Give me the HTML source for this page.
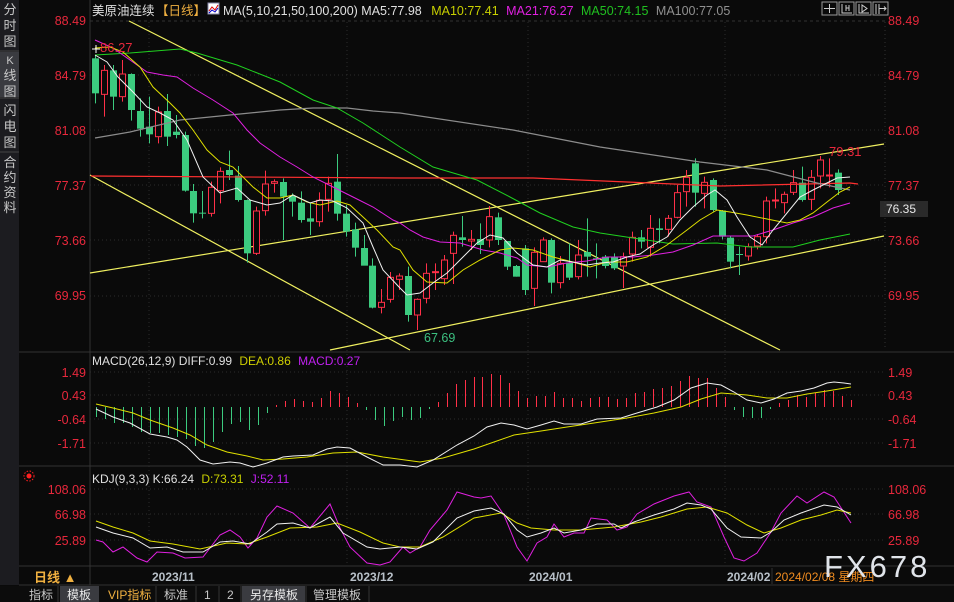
<!DOCTYPE html>
<html><head><meta charset="utf-8"><style>
html,body{margin:0;padding:0;background:#0a0a0a;width:954px;height:602px;overflow:hidden;font-family:"Liberation Sans","Noto Sans CJK SC",sans-serif}
svg{position:absolute;left:0;top:0}
text{font-family:"Liberation Sans","Noto Sans CJK SC",sans-serif}
</style></head><body>
<svg id="s" width="954" height="602" xmlns="http://www.w3.org/2000/svg">
<rect width="954" height="602" fill="#0a0a0a"/>
<!-- sidebar -->
<rect x="0" y="0" width="19" height="585" fill="#1c1c20"/>
<rect x="0" y="52" width="19" height="45" fill="#3a3b40"/>
<g fill="#c8c8c8" font-size="13" text-anchor="middle">
<text x="10" y="14">分</text><text x="10" y="30">时</text><text x="10" y="46">图</text>
<text x="10" y="64" font-size="11">K</text><text x="10" y="80">线</text><text x="10" y="96">图</text>
<text x="10" y="115">闪</text><text x="10" y="131">电</text><text x="10" y="147">图</text>
<text x="10" y="167">合</text><text x="10" y="182">约</text><text x="10" y="197">资</text><text x="10" y="212">料</text>
</g>
<line x1="0" y1="51" x2="19" y2="51" stroke="#444"/><line x1="0" y1="98" x2="19" y2="98" stroke="#444"/><line x1="0" y1="152" x2="19" y2="152" stroke="#444"/>
<!-- frame -->
<line x1="90" y1="0" x2="90" y2="585" stroke="#333"/>
<line x1="19" y1="352" x2="954" y2="352" stroke="#333"/>
<line x1="19" y1="466" x2="954" y2="466" stroke="#333"/>
<line x1="19" y1="566" x2="954" y2="566" stroke="#333"/>
<line x1="19" y1="585" x2="954" y2="585" stroke="#333"/>
<g id="grid" stroke="#2c2c2c" stroke-dasharray="1,3"></g>
<line x1="90" y1="21" x2="885" y2="21" stroke="#333" stroke-dasharray="3,3"/>
<!-- header -->
<text x="92" y="15" font-size="12.5" fill="#e0e0e0">美原油连续</text>
<text x="156" y="15" font-size="12.5" fill="#f0b040">【日线】</text>
<rect x="208" y="3" width="11" height="11" fill="#fff" stroke="#88a"/>
<polyline points="209,11 212,7 215,10 218,5" stroke="#d00" fill="none"/>
<polyline points="209,13 212,10 215,12 218,8" stroke="#00c" fill="none"/>
<text x="223" y="15" font-size="12.5"><tspan fill="#e0e0e0">MA(5,10,21,50,100,200) </tspan><tspan fill="#e0e0e0">MA5:77.98 </tspan><tspan fill="#c8d000" dx="6">MA10:77.41 </tspan><tspan fill="#e020e0" dx="4">MA21:76.27 </tspan><tspan fill="#20c020" dx="4">MA50:74.15 </tspan><tspan fill="#909090" dx="4">MA100:77.05</tspan></text>
<g stroke="#999" fill="none"><rect x="822" y="2" width="15" height="13"/><rect x="839" y="2" width="15" height="13"/><rect x="856" y="2" width="15" height="13"/><rect x="873" y="2" width="15" height="13"/></g>
<g stroke="#ccc" fill="none"><path d="M829.5 4v9M824 8.5h11"/><path d="M842 4v9h10M846 5v6M849 5v6M846 8h3"/><path d="M859 4v9h10M862 5v7l5-3.5z"/><path d="M876 4v10M879 4v10M879 8.5h7M884 6.5l2 2-2 2"/></g>
<!-- price axis labels -->
<g font-size="12.5" fill="#e8283c">
<text x="86" y="25" text-anchor="end">88.49</text><text x="86" y="80" text-anchor="end">84.79</text><text x="86" y="135" text-anchor="end">81.08</text><text x="86" y="190" text-anchor="end">77.37</text><text x="86" y="245" text-anchor="end">73.66</text><text x="86" y="300" text-anchor="end">69.95</text>
<text x="888" y="25">88.49</text><text x="888" y="80">84.79</text><text x="888" y="135">81.08</text><text x="888" y="190">77.37</text><text x="888" y="245">73.66</text><text x="888" y="300">69.95</text>
<text x="86" y="377" text-anchor="end">1.49</text><text x="86" y="400" text-anchor="end">0.43</text><text x="86" y="424" text-anchor="end">-0.64</text><text x="86" y="448" text-anchor="end">-1.71</text>
<text x="888" y="377">1.49</text><text x="888" y="400">0.43</text><text x="888" y="424">-0.64</text><text x="888" y="448">-1.71</text>
<text x="86" y="494" text-anchor="end">108.06</text><text x="86" y="519" text-anchor="end">66.98</text><text x="86" y="545" text-anchor="end">25.89</text>
<text x="888" y="494">108.06</text><text x="888" y="519">66.98</text><text x="888" y="545">25.89</text>
</g>
<rect x="880" y="201" width="48" height="16" fill="#2a2a2a"/>
<text x="886" y="213" font-size="12" fill="#e8e8e8">76.35</text>
<line x1="885" y1="22" x2="885" y2="350" stroke="#333" stroke-dasharray="1,3"/>
<g id="main"></g>
<text x="100" y="52" font-size="13" fill="#e8283c">86.27</text>
<text x="829" y="156" font-size="13" fill="#e8283c">79.31</text>
<text x="424" y="342" font-size="12.5" fill="#3cc080">67.69</text>
<!-- MACD -->
<text x="92" y="365" font-size="12"><tspan fill="#e0e0e0">MACD(26,12,9) DIFF:0.99 </tspan><tspan fill="#d0d000" dx="4">DEA:0.86 </tspan><tspan fill="#c020f0" dx="4">MACD:0.27</tspan></text>
<text x="92" y="483" font-size="12"><tspan fill="#e0e0e0">KDJ(9,3,3) K:66.24 </tspan><tspan fill="#c8d000" dx="4">D:73.31 </tspan><tspan fill="#c020f0" dx="4">J:52.11</tspan></text>
<circle cx="29" cy="476" r="2.5" fill="#ff2020"/><circle cx="29" cy="476" r="5" fill="none" stroke="#ff2020" stroke-dasharray="1.5,1.5"/>
<!-- dates -->
<text x="34" y="582" font-size="13" font-weight="bold" fill="#f0b040">日线 ▲</text>
<g font-size="12" font-weight="bold" fill="#b8c0c8"><text x="152" y="581">2023/11</text><text x="350" y="581">2023/12</text><text x="529" y="581">2024/01</text><text x="727" y="581">2024/02</text></g>
<text x="775" y="581" font-size="12" fill="#f08c20">2024/02/08 星期四</text>
<line x1="772" y1="568" x2="772" y2="584" stroke="#333"/>
<text x="824" y="577" font-size="31" fill="#e0e4ea" letter-spacing="3">FX678</text>
<!-- tabs -->
<rect x="0" y="586" width="954" height="16" fill="#0c0c0c"/>
<rect x="60" y="586" width="39" height="16" fill="#3a3b40"/><rect x="242" y="586" width="63" height="16" fill="#3a3b40"/>
<g stroke="#333"><line x1="58" y1="586" x2="58" y2="602"/><line x1="156" y1="586" x2="156" y2="602"/><line x1="196" y1="586" x2="196" y2="602"/><line x1="219" y1="586" x2="219" y2="602"/><line x1="241" y1="586" x2="241" y2="602"/><line x1="306" y1="586" x2="306" y2="602"/><line x1="369" y1="586" x2="369" y2="602"/></g>
<g font-size="12" fill="#c8c8c8"><text x="29" y="599">指标</text><text x="67" y="599" fill="#e8e8e8">模板</text><text x="108" y="599" fill="#f0b040">VIP指标</text><text x="164" y="599">标准</text><text x="204" y="599">1</text><text x="227" y="599">2</text><text x="250" y="599" fill="#e8e8e8">另存模板</text><text x="313" y="599">管理模板</text></g>
</svg>
<script>
var NS="http://www.w3.org/2000/svg",S=document.getElementById('s'),M=document.getElementById('main'),G=document.getElementById('grid');
function el(t,a,p){var e=document.createElementNS(NS,t);for(var k in a)e.setAttribute(k,a[k]);(p||M).appendChild(e);return e;}
[75,130,185,240,296,372,395,419,443,489,514,540].forEach(function(y){el('line',{x1:90,y1:y,x2:885,y2:y},G);});
[149,347,528,725].forEach(function(x){el('line',{x1:x,y1:22,x2:x,y2:566},G);});
function pl(pts,c,w){el('polyline',{points:pts.map(function(p){return p.join(',')}).join(' '),fill:'none',stroke:c,'stroke-width':w||1});}
[[129,21,780,350],[90,175,410,350],[90,273,884,144],[330,350,884,236]].forEach(function(l){el('line',{x1:l[0],y1:l[1],x2:l[2],y2:l[3],stroke:'#f0f060','stroke-width':1.2});});
var A=[['g',85,190,75,220],['r',121,193,105,260],['g',121,200,105,240],['r',132,200,90,215],['g',132,240,130,272],['g',243,296,205,320],['g',290,313,200,340],['r',246,320,230,340],['g',243,320,192,348],['g',305,315,255,325],['g',315,482,305,485],['g',483,550,462,578],['g',548,551,483,565],['r',472,550,455,560],['r',424,482,412,520],['g',420,435,362,450],['g',437,510,408,515],['g',510,670,508,698],['r',543,670,530,675],['r',462,542,422,557],['r',455,460,448,488],['g',456,500,445,630],['g',498,515,490,560],['g',518,570,484,578],['g',565,575,520,615],['r',511,575,487,590],['r',460,508,440,545],['g',455,551,372,572],['g',551,605,525,620],['g',598,653,578,680],['g',654,707,615,690],['g',707,833,685,835],['r',817,832,777,850],['r',742,808,726,818]];
var B=[['r',438,448,430,480],['g',438,555,410,575],['r',508,555,505,600],['r',430,505,400,520],['r',425,428,400,480],['r',390,446,375,465],['r',316,370,305,462],['g',322,330,258,350],['r',328,333,300,360],['g',327,345,280,372],['r',260,330,228,352],['g',262,330,248,345],['g',333,410,333,420],['g',408,440,405,440],['g',355,480,345,495],['r',367,475,352,528],['r',330,395,322,395],['g',330,458,325,490],['r',400,458,378,475],['g',398,443,340,450],['r',375,440,330,448],['g',366,380,265,440],['g',385,389,340,445],['g',380,408,375,415],['g',380,415,370,420],['r',380,408,368,474],['r',322,372,305,395],['g',322,335,300,355],['r',295,352,255,380],['g',295,300,265,340],['r',265,298,255,320],['r',188,262,165,265],['r',142,185,120,230],['g',100,188,85,230],['r',157,190,140,235],['g',150,240,145,245],['g',242,320,240,328],['g',323,395,318,415],['g',372,375,350,435],['r',350,378,340,392],['r',320,348,312,358],['r',213,320,200,340],['r',210,213,175,235],['r',193,218,185,250],['r',158,187,120,195],['g',158,210,110,215],['r',142,208,120,240],['r',90,138,78,175],['r',135,138,85,172],['g',128,180,118,195]];
var all=A.map(function(c){return [c[0],30+c[1]/3,30+c[2]/3,30+c[3]/3,30+c[4]/3];}).concat(B.map(function(c){return [c[0],130+c[1]/3,130+c[2]/3,130+c[3]/3,130+c[4]/3];}));
all.forEach(function(c,i){var x=Math.round(95+i*8.95)+0.5,col=c[0]=='g'?'#3ccb7f':'#ff3048';
el('line',{x1:x,y1:c[3],x2:x,y2:c[4],stroke:col});
var h=Math.max(1,c[2]-c[1]);
if(c[0]=='g')el('rect',{x:x-3.5,y:c[1],width:7,height:h,fill:col});
else el('rect',{x:x-3,y:c[1],width:6,height:h,fill:'#0a0a0a',stroke:col});});
pl([[91,176],[400,178],[533,178],[650,183],[720,186],[850,183],[858,184]],'#ff3030',1.2);
pl([[95,138],[130,132],[180,120],[230,115],[280,110],[313,108],[347,108],[373,111],[400,113],[513,130],[600,147],[700,162],[767,170],[817,183],[850,190]],'#8c8c8c',1.2);
pl([[95,55],[130,53],[180,49],[197,53],[237,65],[280,82],[313,100],[337,108],[363,123],[400,147],[433,167],[477,180],[510,197],[540,213],[573,227],[600,233],[633,238],[673,244],[717,243],[750,247],[793,247],[820,240],[850,234]],'#20d020');
pl([[95,40],[113,48],[130,60],[147,72],[163,75],[177,77],[193,88],[213,100],[233,113],[247,130],[260,143],[280,157],[297,167],[313,177],[333,187],[353,197],[373,207],[393,220],[400,223],[410,230],[423,237],[440,242],[460,243],[483,250],[500,253],[517,258],[527,265],[547,267],[567,263],[587,261],[607,257],[633,257],[653,255],[673,252],[693,245],[713,236],[733,236],[753,236],[773,230],[793,223],[813,217],[833,208],[850,203]],'#e020e0');
pl([[95,48],[110,47],[123,52],[140,67],[153,87],[170,103],[180,113],[193,130],[207,150],[220,162],[233,167],[243,177],[253,187],[267,198],[280,198],[293,195],[307,202],[320,205],[337,201],[350,205],[363,217],[377,230],[393,247],[400,250],[413,270],[427,282],[447,283],[463,270],[480,260],[500,250],[513,248],[533,250],[553,257],[573,262],[590,267],[607,262],[627,262],[647,257],[667,245],[687,230],[700,220],[717,210],[730,212],[747,215],[767,219],[787,223],[800,220],[813,213],[827,202],[840,192],[850,187]],'#e0e000');
pl([[95,55],[107,62],[118,77],[133,92],[147,107],[160,113],[173,120],[187,140],[203,177],[220,193],[237,188],[250,200],[267,205],[280,203],[293,195],[310,203],[320,200],[333,201],[347,208],[363,223],[373,247],[383,270],[400,288],[407,295],[420,293],[433,283],[447,273],[463,257],[477,243],[490,235],[503,238],[517,253],[533,265],[547,267],[560,260],[573,262],[587,265],[600,263],[613,262],[627,257],[640,254],[653,245],[667,237],[680,220],[693,207],[707,195],[715,190],[727,200],[737,217],[750,237],[762,245],[773,230],[787,213],[800,197],[813,190],[827,183],[837,178],[850,177]],'#f0f0f0');
el('line',{x1:92,y1:49,x2:100,y2:49,stroke:'#fff'});el('line',{x1:96,y1:45,x2:96,y2:53,stroke:'#fff'});
var H=[[96,417,'g'],[105,419,'g'],[114,423,'g'],[123,423,'g'],[132,427,'g'],[141,432,'g'],[150,433,'g'],[159,433,'g'],[168,435,'g'],[177,437,'g'],[186,439,'g'],[195,446,'g'],[204,448,'g'],[213,442,'g'],[222,432,'g'],[231,424,'g'],[240,422,'g'],[249,430,'g'],[258,425,'g'],[267,413,'g'],[276,405],[285,401],[294,399],[303,401],[312,402],[321,398],[330,391],[339,393],[348,397],[357,403],[366,410,'g'],[375,420,'g'],[384,426,'g'],[393,421,'g'],[402,417,'g'],[411,420,'g'],[420,418,'g'],[429,409,'g'],[438,402],[447,393],[456,384],[465,380],[474,377],[482,377],[491,374],[500,375],[509,383],[518,391],[527,398],[536,396],[545,396],[554,392],[563,398],[572,398],[581,401],[590,398],[599,397],[608,397],[617,399],[626,398],[635,393],[644,392],[653,389],[662,388],[671,386],[680,381],[689,376],[698,378],[707,378],[716,388],[725,397],[734,410,'g'],[743,417,'g'],[752,418,'g'],[761,418,'g'],[770,409,'g'],[779,403],[788,400],[797,395],[806,397],[815,393],[824,390],[833,391],[842,396],[851,400]];
H.forEach(function(h){var x=h[0]+0.5;el('line',{x1:x,y1:407,x2:x,y2:h[1],stroke:h[2]?'#3ccb7f':'#ff3048'});});
pl([[96,404],[113,408],[133,413],[150,420],[173,428],[190,435],[207,445],[227,452],[247,456],[263,460],[283,459],[307,457],[333,453],[357,452],[383,457],[420,462],[443,458],[474,449],[494,442],[514,435],[541,431],[567,427],[594,423],[627,418],[654,413],[681,407],[701,399],[721,393],[747,395],[767,398],[787,398],[807,394],[827,391],[851,387]],'#e0e000');
pl([[96,409],[113,417],[130,423],[150,434],[167,437],[177,440],[187,447],[200,460],[213,464],[230,462],[240,463],[253,467],[267,463],[283,457],[293,456],[313,455],[327,449],[337,447],[350,448],[367,457],[383,465],[400,465],[417,467],[433,460],[457,445],[474,436],[487,427],[501,423],[514,425],[527,429],[541,425],[554,421],[564,424],[581,424],[597,419],[621,418],[637,413],[657,407],[674,400],[691,388],[707,383],[721,385],[734,392],[747,400],[761,403],[774,399],[787,393],[801,391],[814,388],[827,383],[834,382],[844,383],[851,384]],'#f0f0f0');
pl([[96,540],[103,542],[113,552],[123,547],[137,558],[147,562],[157,552],[173,553],[185,558],[203,557],[220,535],[230,530],[240,537],[248,548],[257,538],[267,517],[277,506],[293,513],[310,528],[330,504],[340,528],[350,547],[367,563],[380,565],[390,562],[403,547],[410,553],[420,547],[430,530],[447,510],[457,492],[474,497],[481,498],[491,496],[504,515],[517,547],[527,561],[537,543],[547,537],[554,524],[564,537],[574,533],[584,533],[591,518],[607,520],[617,530],[627,527],[637,514],[654,504],[674,496],[689,492],[697,502],[711,507],[724,537],[734,558],[744,561],[757,553],[771,532],[781,513],[797,496],[807,503],[824,492],[834,497],[851,523]],'#e020e0');
pl([[96,521],[113,527],[133,533],[150,541],[173,544],[200,549],[227,543],[247,544],[267,537],[290,528],[317,527],[337,523],[360,532],[383,543],[400,547],[420,547],[443,537],[474,518],[501,513],[517,523],[531,528],[554,530],[581,530],[614,527],[641,522],[661,517],[687,509],[707,507],[727,513],[747,525],[764,533],[781,528],[801,520],[821,515],[837,510],[851,513]],'#e0e000');
pl([[96,527],[113,533],[133,538],[150,548],[167,547],[183,552],[203,552],[220,542],[233,541],[250,544],[267,532],[277,524],[293,523],[310,528],[330,517],[343,533],[367,547],[380,549],[400,547],[417,549],[433,542],[457,518],[474,511],[491,508],[504,514],[517,530],[527,537],[541,533],[554,528],[564,533],[581,530],[597,524],[614,524],[621,528],[634,522],[654,515],[674,509],[687,503],[701,505],[711,509],[727,528],[741,537],[761,538],[771,532],[784,520],[801,513],[824,505],[837,507],[851,515]],'#f0f0f0');
</script>
</body></html>
